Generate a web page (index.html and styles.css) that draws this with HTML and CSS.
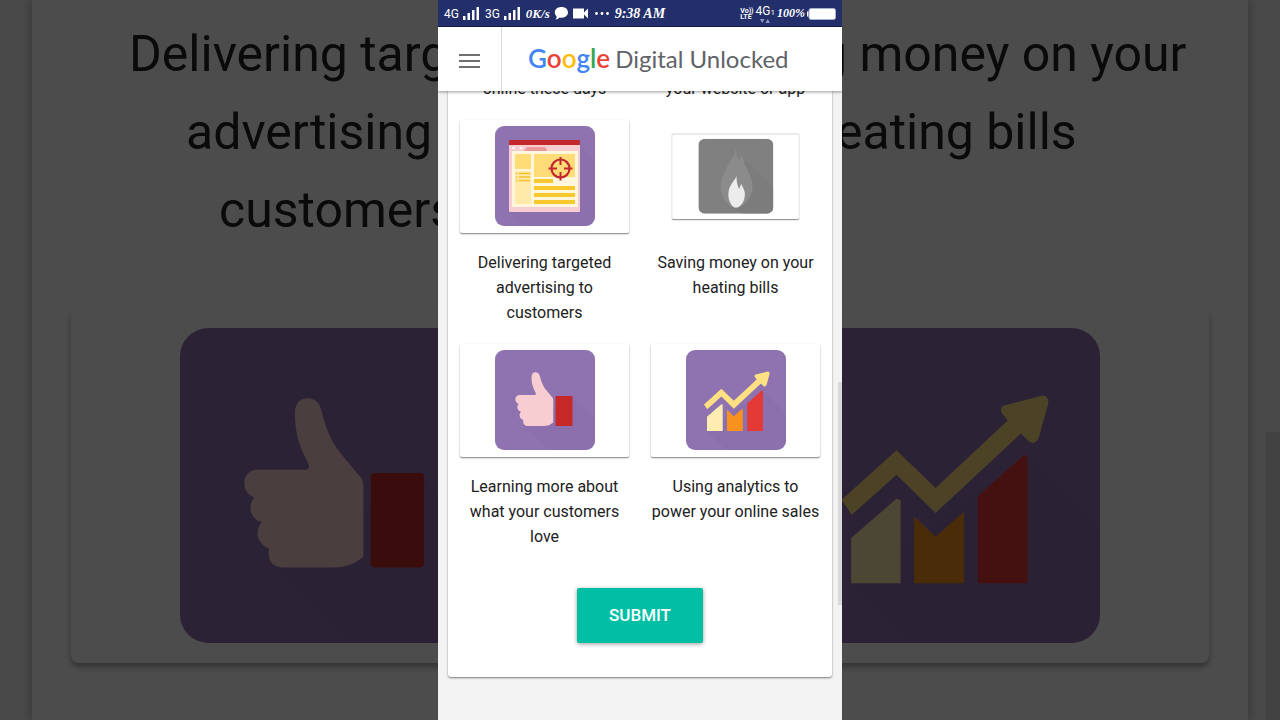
FILE: index.html
```html
<!DOCTYPE html>
<html lang="en">
<head>
    <meta charset="UTF-8">
    <meta name="viewport" content="width=device-width, initial-scale=1.0">
    <title>Google Digital Unlocked</title>
    <link rel="stylesheet" href="styles.css">
</head>
<body>
    <!-- Shared pictures -->
    <svg class="sprite" aria-hidden="true">
        <symbol id="pic-ads" viewBox="0 0 100 100">
            <rect width="100" height="100" rx="9" fill="#8e73b0"/>
            <path d="M85 19l15 15v57a9 9 0 0 1-9 9H28L14 86z" fill="#8669a8" opacity=".35"/>
            <rect x="14" y="16" width="71" height="70" rx="1" fill="#f8cdd2"/>
            <path d="M14 19v-4q0-1 1-1h69q1 0 1 1v4z" fill="#c1272d"/>
            <path d="M29 25l2-3q1-1 2-1h16q1 0 2 1l1 3z" fill="#e9999c"/>
            <circle cx="18.500" cy="22" r="1.300" fill="#fff"/>
            <circle cx="26" cy="22" r="1.300" fill="#fff"/>
            <rect x="17" y="25" width="66" height="56" fill="#fff6dc"/>
            <path d="M20 28h16v15H20zM39 28h41v23H39z" fill="#ffdc78"/>
            <path d="M20 45h16v33H20z" fill="#ffeaaa"/>
            <path d="M39 53h19v4H39zM39 60h41v4H39zM39 67h41v4H39zM39 74h41v4H39z" fill="#f8c82f"/>
            <path d="M24 47.500h11M24 51h11M24 54.500h11M21 47.500h1.500M21 51h1.500M21 54.500h1.500" stroke="#f5c02a" stroke-width="1.600"/>
            <circle cx="65.500" cy="42.500" r="9" fill="none" stroke="#c1272d" stroke-width="2.200"/>
            <path d="M65.500 31v8M65.500 46v8.500M53.500 42.500h8.500M69 42.500h8.500" stroke="#c1272d" stroke-width="2"/>
        </symbol>
        <symbol id="pic-flame" viewBox="0 0 100 100">
            <rect width="100" height="100" rx="9" fill="#808080"/>
            <path d="M62 28l38 37v26a9 9 0 0 1-9 9H60L46 92z" fill="#797979" opacity=".6"/>
            <path d="M49.500 13C50 25 30 42 30 64c0 15 9 25 20 29 13-4 22-14 22-29 0-17-12-27-14-43l-3 8C51 26 51 19 49.500 13z" fill="#8b8b8b"/>
            <path d="M51 49c-1 6-11 12-11 25 0 8 3 14 7 17q3 1.500 6.500 0c5-3 8.500-9 8.500-17 0-6-3-9-5-14l-2.500 7c-2.500-4-4-12-3.500-18z" fill="#ececec"/>
        </symbol>
        <symbol id="pic-thumb" viewBox="0 0 100 100">
            <rect width="100" height="100" rx="9" fill="#8e73b0"/>
            <path d="M77 47l23 22v22a9 9 0 0 1-9 9H53L30 76z" fill="#8669a8" opacity=".35"/>
            <path d="M36.500 27c0-3 1.500-4.700 4-4.700s4 1.700 4.400 4C46.500 33 48.500 37 52 41l5 6c1 1 1.200 2 1.200 3v22.500C55.500 75 52.500 76 48 76H32.500c-2.600 0-4.300-1.800-4.300-4v-2c-3.700-1.500-4.700-5.500-2.200-8.500-3.600-.8-4.700-4.500-2.500-7.800-4.500-1.500-4-8.700 1-8.700h15.200c1.200 0 1.500-.7 1-2-3-6-4.200-9.500-4.200-16z" fill="#f8cdd2"/>
            <rect x="60.500" y="46" width="17" height="30" rx="1.300" fill="#c62828"/>
        </symbol>
        <symbol id="pic-chart" viewBox="0 0 100 100">
            <rect width="100" height="100" rx="9" fill="#8e73b0"/>
            <path d="M77 41l23 23v27a9 9 0 0 1-9 9H40L21 81z" fill="#8669a8" opacity=".35"/>
            <path d="M21 81V66.700l14.400-12.500 1.300.5V81z" fill="#ffecb0"/>
            <path d="M41 81V59.800l6.800 6.500 9-8V81z" fill="#f7921e"/>
            <path d="M61.200 81V53.400L76 40.200l1 .8v40z" fill="#e53935"/>
            <path d="M21.200 59.300L18 54.500l17.400-15.700 12.400 12 22.900-21.400-1.900-2.400q-.8-1.700.8-2.400l12.200-3.200q1.800 0 1.800 2.400l-2.900 10.600q-1 2.800-3 1.800l-2.800-2.700-27.100 25.200-12.400-12.100z" fill="#ffe082"/>
        </symbol>
        <symbol id="signal" viewBox="0 0 16 13">
            <path d="M0 9h2.500v4H0zM4.500 6H7v7H4.500zM9 3h2.500v10H9zM13.500 0H16v13h-2.500z" fill="#fff"/>
        </symbol>
    </svg>

    <div class="stage">
        <!-- Enlarged, dimmed copy behind the phone -->
        <div class="backdrop" aria-hidden="true">
            <div class="backdrop-card">
                <div class="backdrop-item">
                    <p class="backdrop-label">Delivering targeted advertising to customers</p>
                    <div class="backdrop-tile"><svg><use href="#pic-thumb"/></svg></div>
                </div>
                <div class="backdrop-item">
                    <p class="backdrop-label">Saving money on your heating bills</p>
                    <div class="backdrop-tile"><svg><use href="#pic-chart"/></svg></div>
                </div>
            </div>
            <div class="backdrop-scroll"></div>
        </div>

        <div class="phone">
            <div class="status">
                <div class="status-group">
                    <span class="net">4G</span>
                    <svg class="bars"><use href="#signal"/></svg>
                    <span class="net net-second">3G</span>
                    <svg class="bars"><use href="#signal"/></svg>
                    <span class="serif speed">0K/s</span>
                    <svg width="15" height="13" viewBox="0 0 15 13"><path d="M7.500 0C11.500 0 14 2.200 14 5.300s-2.500 5.400-6.300 5.400c-.8 0-1.500 0-2.200-.2-1 1.200-2.300 1.900-4 2 .8-.9 1.200-2 1.100-3.200C1.500 8.300.8 7 .8 5.300.8 2.200 3.500 0 7.500 0z" fill="#fff"/></svg>
                    <svg class="camera" width="16" height="11" viewBox="0 0 16 11"><path d="M0 .5h11v4l3.500-3.500q.5-.4.500.3v8.400q0 .7-.5.300L11 6.500v4H0z" fill="#fff"/></svg>
                    <svg width="14" height="3" viewBox="0 0 14 3"><circle cx="1.500" cy="1.500" r="1.400" fill="#fff"/><circle cx="7" cy="1.500" r="1.400" fill="#fff"/><circle cx="12.500" cy="1.500" r="1.400" fill="#fff"/></svg>
                    <time class="serif clock">9:38 AM</time>
                </div>
                <div class="status-group status-right">
                    <span class="volte"><span>Vo))</span><span>LTE</span></span>
                    <span class="net-data">
                        <span class="net">4G<small>1</small></span>
                        <svg width="10" height="4" viewBox="0 0 10 4"><path d="M0 0h4.500L2.200 4zM5.500 4H10L7.800 0z" fill="#8f98bf"/></svg>
                    </span>
                    <span class="serif battery-text">100%</span>
                    <svg width="29" height="12" viewBox="0 0 29 12"><path d="M0 3.500h1.500v5H0z" fill="#fff"/><rect x="2" y=".5" width="26.500" height="11" rx="2" fill="#fff" stroke="#aab1d0"/></svg>
                </div>
            </div>

            <header class="header">
                <button type="button" class="menu" aria-label="Menu">
                    <svg width="21" height="14" viewBox="0 0 21 14"><path d="M0 1h21M0 7h21M0 13h21" stroke="#6e6e6e" stroke-width="2"/></svg>
                </button>
                <a href="#" class="brand">
                    <span class="google"><span class="blue">G</span><span class="red">o</span><span class="yellow">o</span><span class="blue">g</span><span class="green">l</span><span class="red">e</span></span>
                    <span class="product">Digital Unlocked</span>
                </a>
            </header>

            <main class="content">
                <form class="card">
                    <div class="options">
                        <p class="label">online these days</p>
                        <p class="label">your website or app</p>
                        <div class="option">
                            <button type="button" class="tile" aria-labelledby="opt-ads"><svg><use href="#pic-ads"/></svg></button>
                            <p class="label" id="opt-ads">Delivering targeted advertising to customers</p>
                        </div>
                        <div class="option">
                            <button type="button" class="tile tile-off" aria-labelledby="opt-heat"><svg><use href="#pic-flame"/></svg></button>
                            <p class="label" id="opt-heat">Saving money on your heating bills</p>
                        </div>
                        <div class="option">
                            <button type="button" class="tile" aria-labelledby="opt-love"><svg><use href="#pic-thumb"/></svg></button>
                            <p class="label" id="opt-love">Learning more about what your customers love</p>
                        </div>
                        <div class="option">
                            <button type="button" class="tile" aria-labelledby="opt-sales"><svg><use href="#pic-chart"/></svg></button>
                            <p class="label" id="opt-sales">Using analytics to power your online sales</p>
                        </div>
                    </div>
                    <button type="submit" class="submit">SUBMIT</button>
                </form>
            </main>
            <div class="phone-scroll"></div>
        </div>
    </div>
</body>
</html>
```
FILE: styles.css
```css
* {
    box-sizing: border-box;
}

body {
    margin: 0;
    background-color: #000;
    font-family: Roboto, "Liberation Sans", sans-serif;
    color: #212121;
}

p {
    margin: 0;
}

svg {
    display: block;
}

.sprite {
    display: none;
}

.stage {
    position: relative;
    display: flex;
    justify-content: center;
    min-height: 100vh;
    overflow: hidden;
}

/* backdrop */
.backdrop {
    position: absolute;
    inset: 0;
    padding: 0 32px;
    background-color: #f3f3f3;
    filter: brightness(0.3);
    overflow: hidden;
}

.backdrop-card {
    display: grid;
    grid-template-columns: 1fr 1fr;
    gap: 72px;
    min-height: 100%;
    padding: 15px 39px 0;
    background-color: #fff;
    box-shadow: 0 0 10px rgba(0, 0, 0, 0.3);
}

.backdrop-item {
    display: grid;
    grid-template-rows: 234px auto 1fr;
    row-gap: 59px;
}

.backdrop-label {
    font-size: 50px;
    line-height: 78px;
    text-align: center;
}

.backdrop-tile {
    padding: 20px;
    border-radius: 8px;
    box-shadow: 0 4px 6px rgba(0, 0, 0, 0.35);
}

.backdrop-tile svg {
    width: 315px;
    height: 315px;
    margin: 0 auto;
}

.backdrop-scroll {
    position: absolute;
    top: 60%;
    right: 0;
    bottom: 0;
    width: 14px;
    background-color: #dcdcdc;
}

/* phone */
.phone {
    position: relative;
    display: flex;
    flex-direction: column;
    flex: 0 1 404px;
    background-color: #f3f3f3;
    overflow: hidden;
}

.status {
    display: flex;
    justify-content: space-between;
    align-items: center;
    height: 27px;
    padding: 1px 6px 0;
    border-bottom: 1px solid #111a4a;
    background-color: #222f6b;
    color: #fff;
    position: relative;
    z-index: 2;
}

.status-group {
    display: flex;
    align-items: center;
    gap: 4px;
}

.status-right {
    gap: 2px;
}

.net {
    font-size: 12px;
    line-height: 12px;
}

.net small {
    font-size: 8px;
}

.net-second {
    margin-left: 2px;
}

.bars {
    width: 16px;
    height: 13px;
}

.serif {
    font-family: "Liberation Serif", serif;
    font-size: 13px;
    font-style: italic;
    font-weight: bold;
}

.speed {
    margin-left: 2px;
}

.camera {
    margin-right: 2px;
}

.clock {
    margin-left: 2px;
    font-size: 14px;
}

.battery-text {
    font-size: 12px;
}

.volte {
    display: flex;
    flex-direction: column;
    font-size: 7px;
    font-weight: bold;
    line-height: 6px;
}

.net-data {
    display: flex;
    flex-direction: column;
    align-items: center;
}

.header {
    display: flex;
    height: 64px;
    background-color: #fff;
    box-shadow: 0 1px 3px rgba(0, 0, 0, 0.4);
    position: relative;
    z-index: 1;
}

.menu {
    display: flex;
    align-items: center;
    justify-content: center;
    width: 64px;
    padding: 4px 0 0;
    border: none;
    border-right: 1px solid #dcdcdc;
    background: none;
    cursor: pointer;
}

.brand {
    display: flex;
    flex: 1;
    align-items: baseline;
    gap: 5px;
    padding-left: 26px;
    font-family: Lato, Roboto, sans-serif;
    font-size: 24px;
    line-height: 62px;
    color: #5f6368;
    text-decoration: none;
    white-space: nowrap;
}

.google {
    font-size: 26px;
    font-weight: 600;
}

.blue {
    color: #4285f4;
}

.red {
    color: #ea4335;
}

.yellow {
    color: #fbbc05;
}

.green {
    color: #34a853;
}

.content {
    padding: 0 10px 40px;
}

.card {
    display: flex;
    flex-direction: column;
    align-items: center;
    margin-top: -15px;
    padding: 0 12px 34px;
    border-radius: 3px;
    background-color: #fff;
    box-shadow: 0 1px 2px rgba(0, 0, 0, 0.5);
}

.options {
    display: grid;
    grid-template-columns: 1fr 1fr;
    gap: 19px 22px;
    width: 100%;
}

.option {
    display: flex;
    flex-direction: column;
    gap: 17px;
}

.label {
    font-size: 16px;
    line-height: 25px;
    text-align: center;
}

.tile {
    width: 100%;
    padding: 6px 6px 7px;
    border: none;
    border-radius: 2px;
    background-color: #fff;
    box-shadow: 0 1px 2px rgba(0, 0, 0, 0.4), 0 1px 0 rgba(0, 0, 0, 0.15);
    cursor: pointer;
}

.tile svg {
    width: 100px;
    height: 100px;
    margin: 0 auto;
}

.tile-off {
    transform: scale(0.75);
}

.submit {
    margin-top: 39px;
    padding: 0 32px;
    border: none;
    border-radius: 2px;
    background-color: #00bfa5;
    box-shadow: 0 1px 4px rgba(0, 0, 0, 0.4);
    color: #fff;
    font-family: inherit;
    font-size: 17px;
    font-weight: 500;
    line-height: 55px;
    cursor: pointer;
}

.phone-scroll {
    position: absolute;
    top: 53%;
    right: 0;
    width: 4px;
    height: 31%;
    background-color: #dadada;
}
```
